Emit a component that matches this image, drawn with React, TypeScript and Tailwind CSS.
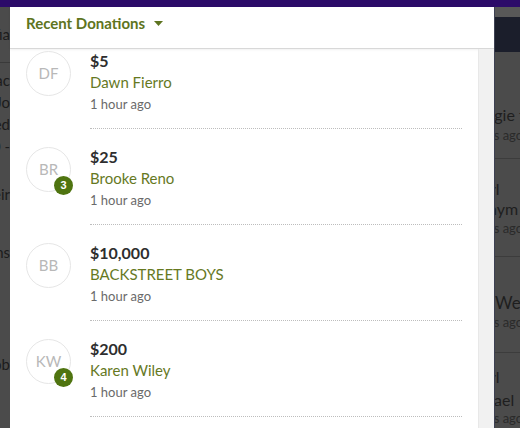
import React from "react";

type Donation = { initials: string; amount: string; name: string; time: string; badge?: number };

const donations: Donation[] = [
  { initials: "DF", amount: "$5", name: "Dawn Fierro", time: "1 hour ago" },
  { initials: "BR", amount: "$25", name: "Brooke Reno", time: "1 hour ago", badge: 3 },
  { initials: "BB", amount: "$10,000", name: "BACKSTREET BOYS", time: "1 hour ago" },
  { initials: "KW", amount: "$200", name: "Karen Wiley", time: "1 hour ago", badge: 4 },
];

function Item({ d }: { d: Donation }) {
  return (
    <div className="flex h-[96px] shrink-0">
      <div className="w-[80px] shrink-0 pl-[16px] pt-[18px]">
        <div className="relative flex h-[45px] w-[45px] items-center justify-center rounded-full border border-[#e6e6e6] text-[15px] text-[#b8b8b8]">
          {d.initials}
          {d.badge !== undefined && (
            <div className="absolute left-[27px] top-[28px] flex h-[19px] w-[19px] items-center justify-center rounded-full bg-[#4f7410] text-[11px] font-bold text-white [font-family:'Liberation_Sans',sans-serif]">
              {d.badge}
            </div>
          )}
        </div>
      </div>
      <div className="flex w-[372px] flex-col border-b border-dotted border-[#bdbdbd] pt-[17px]">
        <div className="h-[22px] text-[16px] font-bold leading-[22px] text-[#2e2e2e]">{d.amount}</div>
        <div className="h-[21px] text-[15px] leading-[21px] text-[#66791f]">{d.name}</div>
        <div className="h-[22px] text-[13px] leading-[22px] text-[#6a6a6a]">{d.time}</div>
      </div>
    </div>
  );
}

function Frag({ t, h, cls = "" }: { t: string; h: number; cls?: string }) {
  return (
    <div className={"flex shrink-0 items-center overflow-hidden whitespace-nowrap " + cls} style={{ height: h }}>
      {t}
    </div>
  );
}

function LFrag({ t, h, cls = "" }: { t: string; h: number; cls?: string }) {
  return (
    <div className={"flex shrink-0 justify-end whitespace-nowrap " + cls} style={{ height: h }}>
      <span className="shrink-0">{t}</span>
    </div>
  );
}

export default function App() {
  return (
    <div className="flex h-[428px] w-[520px] flex-col overflow-hidden bg-[#4b4b4b] [font-family:Lato,'Liberation_Sans',sans-serif]">
      <div className="h-[7px] shrink-0 bg-[#2c0b69]" />
      <div className="flex min-h-0 flex-1">
        {/* left backdrop */}
        <div className="flex w-[10px] shrink-0 flex-col overflow-hidden text-[15px] text-[#1c1c1c]">
          <div className="flex h-[56px] shrink-0 flex-col justify-end border-b border-[#3a3a3a]">
            <LFrag t="Sofia" h={22} cls="items-center" />
            <div className="h-[17px] shrink-0" />
          </div>
          <LFrag t="Mac" h={24} cls="pt-[6px]" />
          <LFrag t="Jo" h={22} cls="pt-[4px]" />
          <LFrag t="Fred" h={22} cls="pt-[4px]" />
          <LFrag t="10 -" h={26} cls="pt-[4px]" />
          <LFrag t="Weir" h={60} cls="items-center pt-[14px]" />
          <LFrag t="Evans" h={70} cls="items-center" />
          <LFrag t="Jacob" h={154} cls="items-center" />
        </div>

        {/* panel */}
        <div className="flex w-[484px] shrink-0 flex-col bg-white">
          <div className="flex h-[42px] shrink-0 items-start border-b border-[#d8d8d8] pl-[16px] pt-[6px] shadow-[0_1px_2px_rgba(0,0,0,0.06)]">
            <span className="text-[15px] font-bold leading-[20px] text-[#5e7420]">Recent Donations</span>
            <svg className="ml-[9px] mt-[8px]" width="9" height="6" viewBox="0 0 9 6">
              <path d="M0 0 L9 0 L4.5 5 Z" fill="#5e7420" />
            </svg>
          </div>
          <div className="flex min-h-0 flex-1">
            <div className="min-w-0 flex-1 overflow-hidden">
              <div className="-mt-[16px] flex flex-col">
                {donations.map((d) => (
                  <Item key={d.initials} d={d} />
                ))}
              </div>
            </div>
            <div className="w-[16px] shrink-0 border-l border-[#e8e8e8] bg-[#f1f1f1]" />
          </div>
        </div>

        {/* right backdrop */}
        <div className="flex min-w-0 flex-1 flex-col overflow-hidden border-l border-[#3d4153] text-[#1e1e1e]">
          <div className="h-[10px] shrink-0 bg-[#585858]" />
          <div className="h-[35px] shrink-0 bg-[#1b1e2b]" />
          <div className="h-[50px] shrink-0" />
          <Frag t="ggie f" h={26} cls="-ml-[9px] text-[16px]" />
          <Frag t="rs ago" h={16} cls="-ml-[6px] text-[13px] text-[#2a2a2a]" />
          <div className="h-[15px] shrink-0 border-b border-[#3c3c3c]" />
          <Frag t="rl" h={40} cls="-ml-[5px] pt-[20px] text-[16px]" />
          <Frag t="nym" h={20} cls="-ml-[7px] text-[16px]" />
          <Frag t="rs ago" h={20} cls="-ml-[6px] text-[13px] text-[#2a2a2a]" />
          <div className="h-[18px] shrink-0 border-b border-[#3c3c3c]" />
          <div className="h-[34px] shrink-0" />
          <Frag t="We" h={24} cls="text-[17px]" />
          <Frag t="rs ago" h={16} cls="-ml-[6px] text-[13px] text-[#2a2a2a]" />
          <div className="h-[22px] shrink-0 border-b border-[#3c3c3c]" />
          <Frag t="rl" h={34} cls="-ml-[5px] pt-[14px] text-[16px]" />
          <Frag t="ael" h={26} cls="-ml-[1px] text-[16px]" />
          <Frag t="rs ago" h={12} cls="-ml-[6px] text-[13px] text-[#2a2a2a]" />
        </div>
      </div>
    </div>
  );
}
